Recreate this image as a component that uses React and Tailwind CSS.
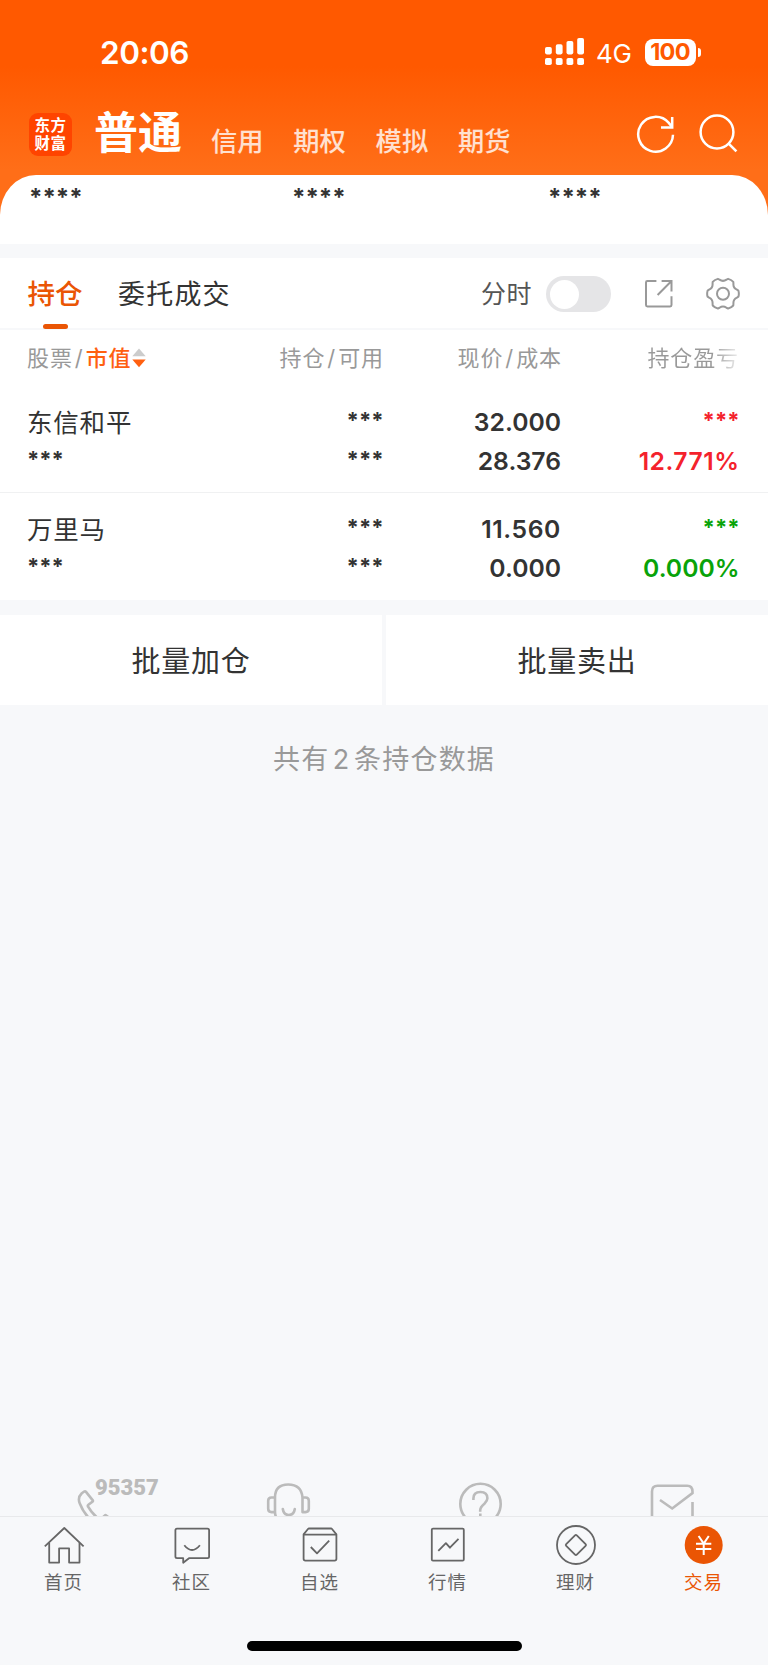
import React from "react";

const gearPath = (() => {
  const at = (deg, r) => {
    const t = (deg * Math.PI) / 180;
    return `${(723 + r * Math.cos(t)).toFixed(2)} ${(293.7 + r * Math.sin(t)).toFixed(2)}`;
  };
  let d = `M${at(-11, 15.7)}`;
  for (let a = 0; a < 360; a += 60) {
    d += `Q${at(a, 16.3)} ${at(a + 11, 15.7)}L${at(a + 16, 14.5)}Q${at(a + 30, 11.6)} ${at(a + 44, 14.5)}L${at(a + 49, 15.7)}`;
  }
  return `${d}Z`;
})();

const markets = ["信用", "期权", "模拟", "期货"];

const holdings = [
  { name: "东信和平", price: "32.000", cost: "28.376", rate: "12.771%", tone: "text-[#f4222c]", rateSpacing: "tracking-[0.5px]", priceSpacing: "tracking-normal" },
  { name: "万里马", price: "11.560", cost: "0.000", rate: "0.000%", tone: "text-[#09a309]", rateSpacing: "tracking-normal", priceSpacing: "tracking-[0.6px]" },
];

const tabs = [
  {
    label: "首页",
    box: "42 1523 44 44",
    art: (
      <>
        <path d="M44.8 1546.3 64.3 1528l19.3 18.3" />
        <path d="M49.2 1543v19.6h9.9v-14.2h10v14.2h10.4V1543" />
      </>
    ),
  },
  {
    label: "社区",
    box: "170 1523 44 44",
    art: (
      <>
        <path d="M177 1528.6h30.5q1.6 0 1.6 1.6v26.4q0 1.6-1.6 1.6H189l-5.8 4.6v-4.6H177q-1.6 0-1.6-1.6v-26.4q0-1.6 1.6-1.6Z" />
        <path d="M184.3 1545.2q7.7 9.6 15.6 0" />
      </>
    ),
  },
  {
    label: "自选",
    box: "298 1523 44 44",
    art: (
      <>
        <path d="M303.6 1534.4v24.4q0 1.8 1.8 1.8h29.2q1.8 0 1.8-1.8v-24.4l-4.4-5.4q-.4-.5-1-.5h-22q-.6 0-1 .5Z" />
        <path d="M303.6 1534.6h32.8M310.8 1547l6.2 6.3 12.2-12.6" />
      </>
    ),
  },
  {
    label: "行情",
    box: "426 1523 44 44",
    art: (
      <>
        <rect x="431.8" y="1528.6" width="32" height="32" rx="1.2" />
        <path d="m438.3 1550.8 7.6-7.7 4 4.6 8.6-8.8" />
      </>
    ),
  },
  {
    label: "理财",
    box: "554 1523 44 44",
    art: (
      <>
        <circle cx="576" cy="1545" r="19" />
        <path d="m575 1535.3-8.8 8.8q-.9.9 0 1.8l8.8 8.8q.9.9 1.8 0l8.8-8.8q.9-.9 0-1.8l-8.8-8.8q-.9-.9-1.8 0Z" />
      </>
    ),
  },
  {
    label: "交易",
    box: "682 1523 44 44",
    active: true,
    art: (
      <>
        <circle cx="703.7" cy="1545" r="19" fill="#ea5504" stroke="none" />
        <path stroke="#fff" strokeWidth="2" d="m698.6 1536 5.1 7.6 5.1-7.6M703.7 1543.6v11.4M696 1543.8h15.3M696 1549h15.3" />
      </>
    ),
  },
];

const cjk = "font-['Inter','Noto_Sans_CJK_SC',sans-serif]";

function StatusBar() {
  return (
    <div className="flex h-[104px] items-center pl-[100px] text-white">
      <span className="mt-[1px] w-[445px] text-[31.5px] font-semibold leading-none tracking-[-0.5px]">20:06</span>
      <svg className="h-7 w-10 shrink-0" viewBox="545 38 40 28" fill="#fff">
        <rect x="545" y="47" width="6.8" height="7.4" rx="1.8" />
        <rect x="555.8" y="44.2" width="6.8" height="10.2" rx="1.8" />
        <rect x="566.5" y="41" width="6.8" height="13.4" rx="1.8" />
        <rect x="577.2" y="38" width="6.8" height="16.4" rx="1.8" />
        <rect x="545" y="58" width="6.8" height="7" rx="1.8" />
        <rect x="555.8" y="58" width="6.8" height="7" rx="1.8" />
        <rect x="566.5" y="58" width="6.8" height="7" rx="1.8" />
        <rect x="577.2" y="58" width="6.8" height="7" rx="1.8" />
      </svg>
      <span className="ml-[11px] mt-[3px] w-[49px] text-[26px] leading-none tracking-[-0.2px]">4G</span>
      <span className="flex h-[27px] w-[51px] items-center justify-center rounded-[8px] bg-white text-[23.5px] font-bold leading-none tracking-[-0.7px] text-[#ff5900]">
        <span className="mr-[1px]">100</span>
      </span>
      <span className="ml-[1.5px] h-[9px] w-[3.5px] rounded-r-full bg-white" />
    </div>
  );
}

function MarketBar() {
  return (
    <div className="flex h-[71px] pl-[29px] text-white">
      <div className="mt-[9px] grid h-[43px] w-[43px] shrink-0 grid-cols-[16px_16px] content-center justify-center rounded-[9px] bg-[#ff4400] text-[15.5px] font-bold leading-[18px]">
        <span>东</span>
        <span>方</span>
        <span>财</span>
        <span>富</span>
      </div>
      <h1 className="ml-[22px] w-[117px] text-[44px] font-bold leading-[59px]">普通</h1>
      <nav className="flex gap-[30px] pt-[19px] text-[26.3px] font-medium leading-[37px] text-white/80">
        {markets.map((m) => (
          <span key={m} className="w-[52.3px] whitespace-nowrap">{m}</span>
        ))}
      </nav>
      <svg className="ml-auto mr-[28px] mt-[9px] h-[44px] w-[104px]" viewBox="636 113 104 44" fill="none" stroke="#fff" strokeWidth="2.5">
        <path d="M673 134.8A17.4 17.4 0 1 1 668.8 122.9L672 127" />
        <path d="M672.2 117v10.6H661" />
        <circle cx="717" cy="132" r="16.4" />
        <path d="m728.4 143.4 8 8" />
      </svg>
    </div>
  );
}

function Stars() {
  return <span className="-mt-[2px] mb-[2px] text-[22px] font-bold">***</span>;
}

function HoldingRow({ item }) {
  return (
    <div className="grid grid-cols-[179.5px_177px_177.5px_178.500px] pl-[27px] text-right text-[24.7px] font-semibold leading-[39px] text-[#333]">
      <div className="flex flex-col text-left">
        <span className="text-[25.5px] font-normal tracking-[0.8px]">{item.name}</span>
        <Stars />
      </div>
      <div className="flex flex-col">
        <Stars />
        <Stars />
      </div>
      <div className="flex flex-col">
        <span className={item.priceSpacing}>{item.price}</span>
        <span>{item.cost}</span>
      </div>
      <div className={`flex flex-col ${item.tone}`}>
        <Stars />
        <span className={item.rateSpacing}>{item.rate}</span>
      </div>
    </div>
  );
}

export default function App() {
  return (
    <div className={`flex h-[1665px] w-[768px] flex-col overflow-hidden bg-[#f7f8fa] ${cjk}`}>
      <header className="h-[215px] shrink-0 bg-[linear-gradient(to_bottom,#ff5900_0px,#ff5900_66px,#ff6e18_170px,#ff6e18_215px)]">
        <StatusBar />
        <MarketBar />
      </header>

      <section className="-mt-10 grid h-[69px] shrink-0 grid-cols-[263px_256px_1fr] bg-white pl-[29px] pt-[5px] text-[24px] font-bold leading-[36px] text-[#333] [border-radius:36px_36px_0_0/40px_40px_0_0]">
        <span>****</span>
        <span>****</span>
        <span>****</span>
      </section>

      <section className="mt-[14px] h-[342px] shrink-0 bg-white">
        <div className="flex h-[72px] items-center border-b-2 border-[#f7f8fa] pl-[27px] pr-7 pt-[2px]">
          <div className="relative flex h-full w-[91px] items-center text-[27.5px] font-medium text-[#ea5504]">
            <span className="pl-[0.5px] pt-[1px]">持仓</span>
            <span className="absolute bottom-[-1px] left-[16px] h-[5px] w-[25px] rounded-full bg-[#ea5504]" />
          </div>
          <div className="pt-[2px] text-[27px] tracking-[1.2px] text-[#333]">委托成交</div>
          <div className="ml-auto pt-[2px] text-[25px] tracking-[0.5px] text-[#555]">分时</div>
          <div className="ml-[14px] flex h-9 w-[65px] items-center rounded-full bg-[#e5e5e7] pl-[3.5px]">
            <span className="h-[29px] w-[29px] rounded-full bg-white" />
          </div>
          <svg className="ml-[31px] h-9 w-[98px]" viewBox="642 276 98 36" fill="none" stroke="#999" strokeWidth="2">
            <path d="M656.4 281H647.4q-1.4 0-1.4 1.4v22.6q0 1.4 1.4 1.4h22.7q1.4 0 1.4-1.4V296.2" />
            <path d="M661.6 281h9.9v10.4M671 281.5 657.6 295" />
            <path d={gearPath} strokeLinejoin="round" />
            <circle cx="723" cy="293.7" r="6" />
          </svg>
        </div>

        <div className="grid h-[56px] grid-cols-[180px_177px_178px_177px] items-center pl-[27px] text-right text-[22px] leading-none tracking-[0.9px] text-[#999]">
          <div className="flex items-center whitespace-nowrap">
            股票<span className="px-[2px]">/</span>
            <span className="font-medium text-[#ff6010]">市值</span>
            <svg className="ml-[1px] h-5 w-[14px]" viewBox="132 348.5 14 20">
              <path d="m139 349 6.7 7.8h-13.4Z" fill="#ccc" />
              <path d="m139 367.8 6.7-7.8h-13.4Z" fill="#ff6010" />
            </svg>
          </div>
          <div>持仓<span className="px-[2px]">/</span>可用</div>
          <div>现价<span className="px-[2px]">/</span>成本</div>
          <div className="bg-[linear-gradient(to_right,#999_0,#999_150px,#eee_177px)] bg-clip-text text-transparent">持仓盈亏</div>
        </div>

        <div className="h-[107px] border-b border-[#f0f1f2] pt-[17px]">
          <HoldingRow item={holdings[0]} />
        </div>
        <div className="pt-[17px]">
          <HoldingRow item={holdings[1]} />
        </div>
      </section>

      <div className="mt-[15px] grid h-[90px] shrink-0 grid-cols-2 gap-1 text-center text-[29px] tracking-[0.8px] text-[#333]">
        <div className="flex items-center justify-center bg-white pt-[4px] leading-10">批量加仓</div>
        <div className="flex items-center justify-center bg-white pt-[4px] leading-10">批量卖出</div>
      </div>

      <p className="mt-[35px] text-center text-[27px] leading-[40px] tracking-[1.2px] text-[#999]">
        共有<span className="px-[3.5px]">2</span>条持仓数据
      </p>

      <div className="mt-auto grid h-[40px] shrink-0 grid-cols-4 overflow-hidden">
        <div className="flex justify-start pl-[76px]">
          <svg className="h-10 w-5 shrink-0" viewBox="76 1476 20 40" overflow="visible" fill="none" stroke="#bbb" strokeWidth="2.6" strokeLinejoin="round">
            <path d="M89 1518q-6-6-9.2-14.5-2.5-6 2-10.3l2.4-1.7q1-.6 1.8.4l6.6 8.2q.7 1-.2 1.7l-4 3q-1 .8-.3 1.9 3 5.5 9 10.8M102 1518l3.5-3 4 3" />
          </svg>
          <span className="-ml-[1px] pt-[1px] font-['Roboto',sans-serif] text-[22px] font-black leading-[22px] text-[#bbb]">95357</span>
        </div>
        <svg className="h-10 w-48" viewBox="192 1476 192 40" fill="none" stroke="#bbb" strokeWidth="2.6" strokeLinecap="round">
          <path d="M276.5 1518q-1.5-3-1.5-6v-14.5q0-13 13.2-13t14.3 13v14.5M275 1497.5h-3.5q-3.3 0-3.3 3.3v8q0 3.3 3.3 3.3h3.5M302.5 1497.5h3q3.3 0 3.3 3.3v8q0 3.3-3.3 3.3h-3M282.8 1509q1 6 6 6t6-6" />
        </svg>
        <svg className="h-10 w-48" viewBox="384 1476 192 40" fill="none" stroke="#bbb" strokeWidth="2.6">
          <circle cx="480.5" cy="1504" r="20.2" />
          <path d="M473.4 1500v-1.5q0-6.5 7-6.5t7 6.3q0 2.7-3 5.5-4.2 3.5-4.2 6.5v1.5M480.3 1513.5v4" />
        </svg>
        <svg className="h-10 w-48" viewBox="576 1476 192 40" fill="none" stroke="#bbb" strokeWidth="2.6">
          <path d="M652 1518v-26.5q0-5.7 5.7-5.7h29.5q5.3 0 5.3 6v1.2L672.2 1508.5 660 1500M692.5 1502v16" />
        </svg>
      </div>

      <footer className="flex h-[149px] shrink-0 flex-col items-center border-t border-[#e8e9eb] bg-[#f7f8fa]">
        <nav className="grid w-full grid-cols-6 pt-[6px]">
          {tabs.map((t) => (
            <div key={t.label} className={`flex flex-col items-center ${t.active ? "text-[#ea5504]" : "text-[#666]"}`}>
              <svg className="h-11 w-11" viewBox={t.box} fill="none" stroke="#666" strokeWidth="1.8" strokeLinejoin="round">
                {t.art}
              </svg>
              <span className="mr-[1px] text-[18.5px] leading-[30px] tracking-[0.9px]">{t.label}</span>
            </div>
          ))}
        </nav>
        <span className="mt-[44px] h-[10px] w-[275px] rounded-full bg-black" />
      </footer>
    </div>
  );
}
